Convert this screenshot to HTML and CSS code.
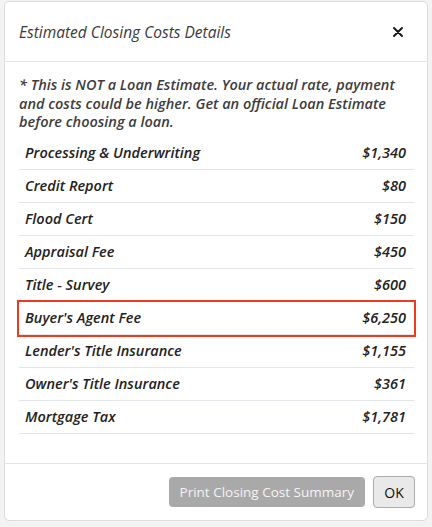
FILE: index.html
```html
<!DOCTYPE html>
<html lang="en">
<head>
    <meta charset="UTF-8">
    <meta name="viewport" content="width=device-width, initial-scale=1.0">
    <title>Estimated Closing Costs Details</title>
    <link rel="stylesheet" href="styles.css">
</head>
<body>

<div class="modal">
    <div class="modal-header">
        <h2 class="modal-title">Estimated Closing Costs Details</h2>
        <button class="close-btn" aria-label="Close">
            <svg width="10" height="10" viewBox="0 0 10 10">
                <path d="M1 1 L9 9 M9 1 L1 9" stroke="#111" stroke-width="1.8" stroke-linecap="round"/>
            </svg>
        </button>
    </div>

    <div class="modal-body">
        <p class="disclaimer">* This is NOT a Loan Estimate. Your actual rate, payment and costs could be higher. Get an official Loan Estimate before choosing a loan.</p>

        <div class="cost-list">
            <div class="cost-row"><span>Processing &amp; Underwriting</span><span>$1,340</span></div>
            <div class="cost-row"><span>Credit Report</span><span>$80</span></div>
            <div class="cost-row"><span>Flood Cert</span><span>$150</span></div>
            <div class="cost-row"><span>Appraisal Fee</span><span>$450</span></div>
            <div class="cost-row"><span>Title - Survey</span><span>$600</span></div>
            <div class="cost-row highlight"><span>Buyer's Agent Fee</span><span>$6,250</span></div>
            <div class="cost-row"><span>Lender's Title Insurance</span><span>$1,155</span></div>
            <div class="cost-row"><span>Owner's Title Insurance</span><span>$361</span></div>
            <div class="cost-row"><span>Mortgage Tax</span><span>$1,781</span></div>
        </div>
    </div>

    <div class="modal-footer">
        <button class="print-btn">Print Closing Cost Summary</button>
        <button class="ok-btn">OK</button>
    </div>
</div>

</body>
</html>
```

FILE: styles.css
```css
body {
    margin: 0;
    background-color: #f3f3f3;
    font-family: "Open Sans", "Lato", sans-serif;
    color: #2b2b2b;
}

.modal {
    box-sizing: border-box;
    width: 424px;
    height: 520px;
    margin: 1px 4px 0 4px;
    background-color: white;
    border: 1px solid #dcdcdc;
    border-radius: 5px;
    display: flex;
    flex-direction: column;
}

/* Header */
.modal-header {
    height: 59px;
    display: flex;
    justify-content: space-between;
    align-items: center;
    padding: 0 24px 0 14px;
    border-bottom: 1px solid #e4e4e4;
}

.modal-title {
    margin: 0;
    font-size: 15.5px;
    font-weight: 400;
    font-style: italic;
    color: #3a3a3a;
}

.close-btn {
    background: none;
    border: none;
    padding: 0;
    cursor: pointer;
    display: flex;
}

/* Body */
.modal-body {
    flex: 1;
    padding: 14px 13px 0 14px;
}

.disclaimer {
    margin: 0 0 5px 0;
    font-size: 14.5px;
    line-height: 18.5px;
    font-weight: 600;
    font-style: italic;
    color: #3d3d3d;
}

.cost-row {
    display: flex;
    justify-content: space-between;
    align-items: center;
    height: 32px;
    padding: 0 8px 0 6px;
    border-bottom: 1px solid #e2e5ea;
    font-size: 14.5px;
    font-weight: 600;
    font-style: italic;
    color: #222;
}

.cost-row.highlight {
    outline: 2px solid #ef3b1d;
    outline-offset: 0;
}

/* Footer */
.modal-footer {
    height: 56px;
    display: flex;
    justify-content: flex-end;
    align-items: center;
    gap: 8px;
    padding: 0 12px 0 0;
    border-top: 1px solid #e4e4e4;
}

.print-btn {
    height: 30px;
    padding: 0 11px;
    background-color: #a9a9a9;
    color: #f4f4f4;
    border: none;
    border-radius: 4px;
    font-family: "Open Sans", sans-serif;
    font-size: 13.5px;
    cursor: pointer;
}

.ok-btn {
    height: 32px;
    width: 42px;
    background-color: #e9e9e9;
    color: #111;
    border: 1px solid #acacac;
    border-radius: 4px;
    font-family: "Open Sans", sans-serif;
    font-size: 14px;
    cursor: pointer;
}
```
